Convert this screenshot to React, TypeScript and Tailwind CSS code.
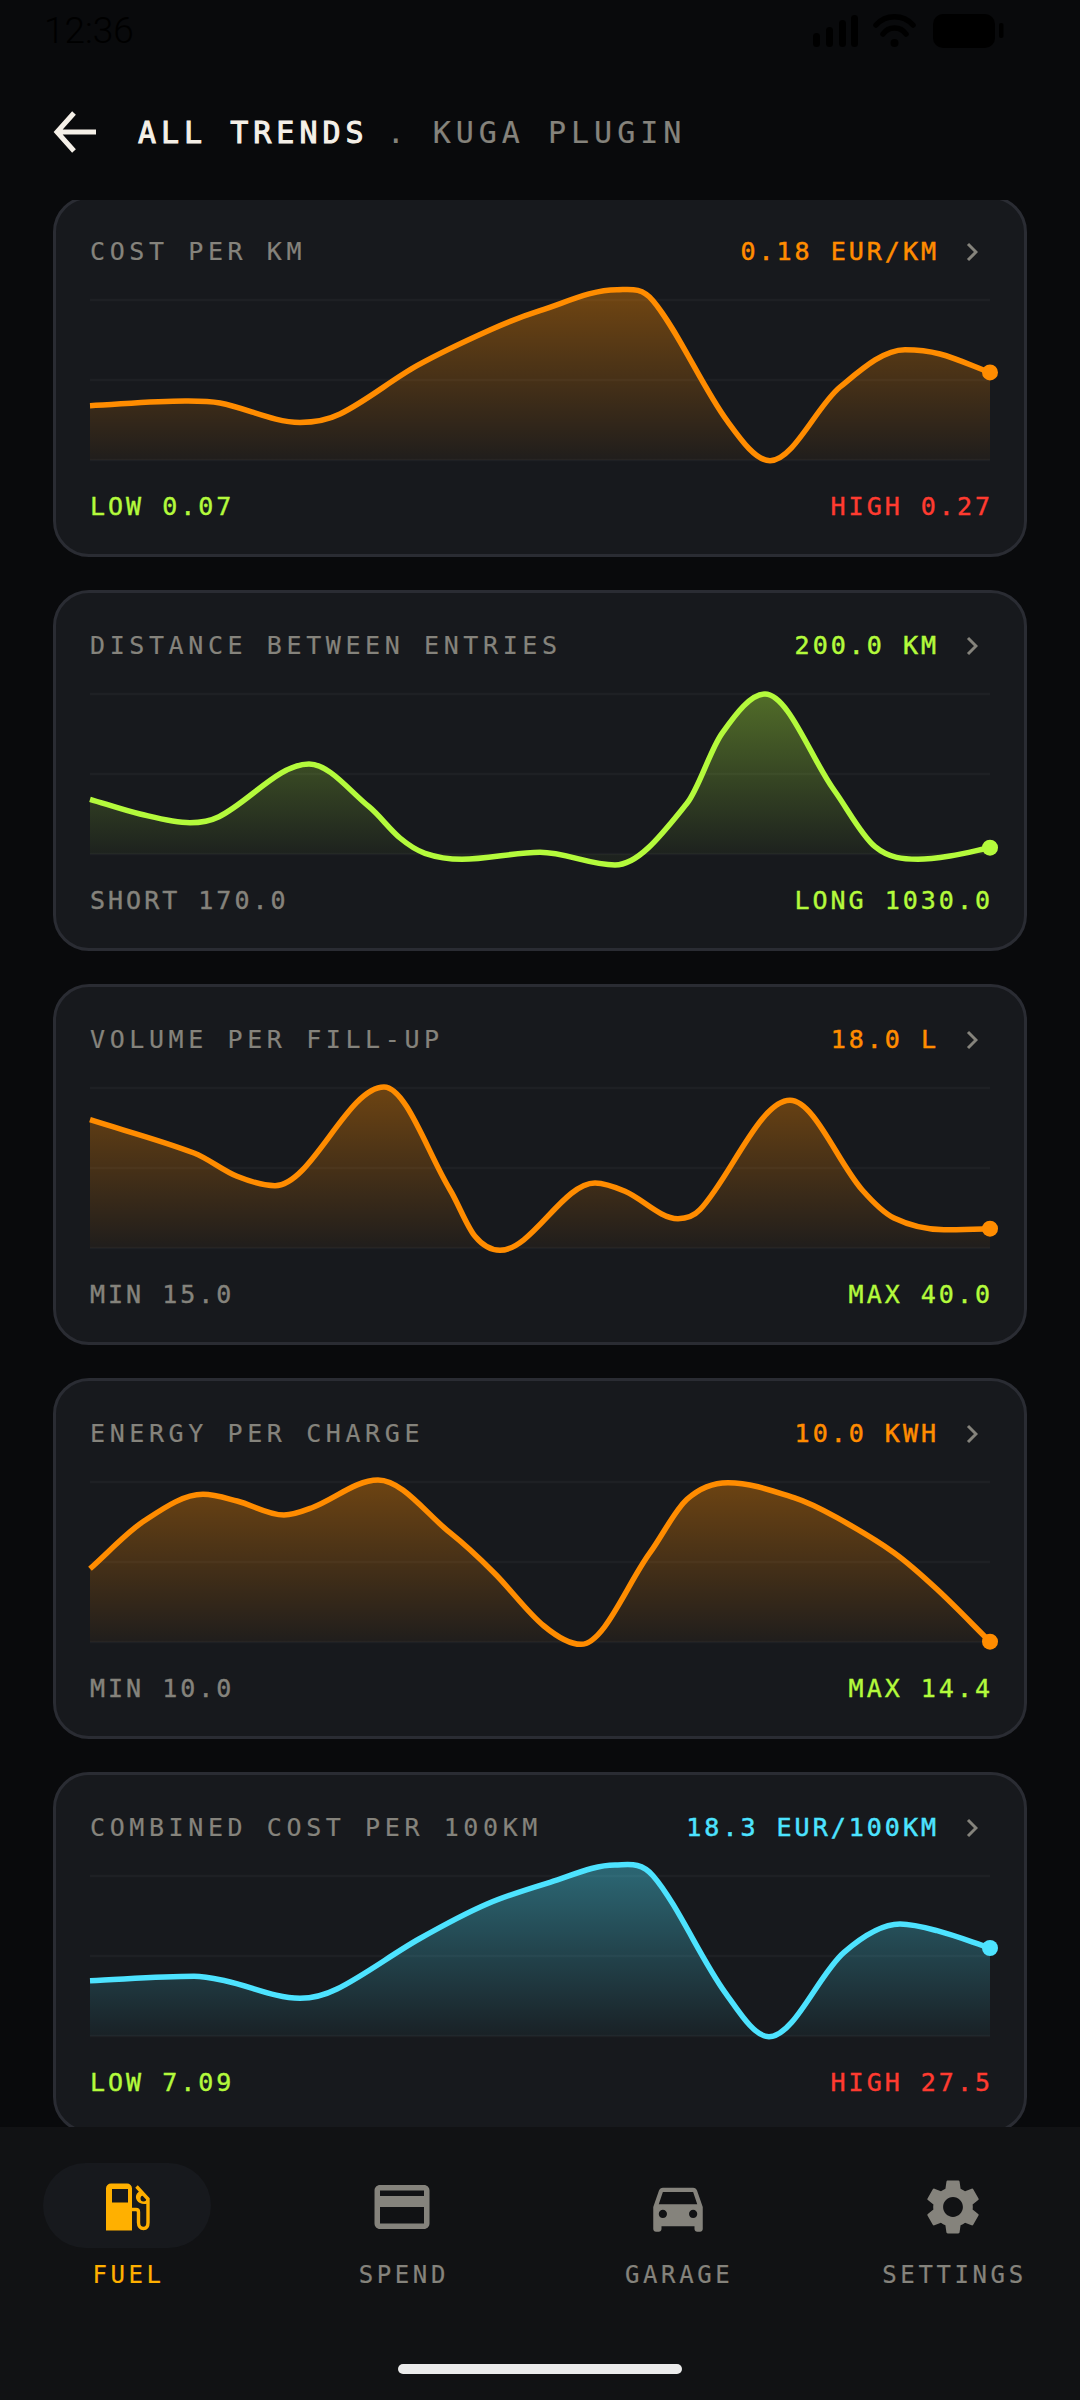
import React from "react";
import { MdCreditCard, MdDirectionsCar, MdSettings } from "react-icons/md";

type Pt = [number, number];

interface Trend {
  title: string;
  value: string;
  color: string;
  left: string;
  leftColor: string;
  right: string;
  rightColor: string;
  points: Pt[];
}

const ORANGE = "text-[#ff8c00]";
const LIME = "text-[#b4fa3c]";
const RED = "text-[#ff3b30]";
const CYAN = "text-[#4de3ff]";
const GREY = "text-[#85837c]";

const trends: Trend[] = [
  {
    title: "COST PER KM",
    value: "0.18 EUR/KM",
    color: "#ff8c00",
    left: "LOW 0.07",
    leftColor: LIME,
    right: "HIGH 0.27",
    rightColor: RED,
    points: [[0, 105.7], [95, 101], [130, 103], [210, 122.4], [250, 114], [327, 65.7], [400, 30], [450, 10.7], [527, -10.3], [563, 0.7], [637, 120.7], [680, 160.7], [750, 87], [815, 49.7], [850, 54], [900, 72.4]],
  },
  {
    title: "DISTANCE BETWEEN ENTRIES",
    value: "200.0 KM",
    color: "#b4fa3c",
    left: "SHORT 170.0",
    leftColor: GREY,
    right: "LONG 1030.0",
    rightColor: LIME,
    points: [[0, 105.3], [50, 120], [100, 128.7], [129, 122.7], [219, 70], [279, 112.7], [310, 144], [335, 159.3], [372, 165.3], [450, 158.3], [525, 171], [597, 109.3], [632, 39.3], [675, 0], [744, 96], [785, 152.7], [828, 165.3], [860, 162], [900, 153.7]],
  },
  {
    title: "VOLUME PER FILL-UP",
    value: "18.0 L",
    color: "#ff8c00",
    left: "MIN 15.0",
    leftColor: GREY,
    right: "MAX 40.0",
    rightColor: LIME,
    points: [[0, 31.7], [104, 65], [147, 88.3], [185, 97.7], [294, -1], [360, 101.7], [385, 148.3], [410, 162.3], [505, 95], [535, 103.3], [588, 130.7], [610, 121.7], [700, 12.3], [772, 101.7], [804, 130], [854, 141.7], [900, 140.7]],
  },
  {
    title: "ENERGY PER CHARGE",
    value: "10.0 KWH",
    color: "#ff8c00",
    left: "MIN 10.0",
    leftColor: GREY,
    right: "MAX 14.4",
    rightColor: LIME,
    points: [[0, 86.7], [54, 39], [113, 12.3], [147, 19], [194, 33], [222, 25.7], [288, -2], [360, 50.7], [404, 90.7], [454, 144], [491, 162.3], [560, 70.7], [597, 17.3], [638, 0.7], [704, 15.7], [747, 35.7], [804, 70.7], [847, 107.3], [900, 159.7]],
  },
  {
    title: "COMBINED COST PER 100KM",
    value: "18.3 EUR/100KM",
    color: "#4de3ff",
    left: "LOW 7.09",
    leftColor: LIME,
    right: "HIGH 27.5",
    rightColor: RED,
    points: [[0, 104.7], [104, 100.3], [135, 104.7], [210, 122.3], [247, 113], [329, 63], [397, 28], [460, 6.3], [525, -11], [563, -0.3], [635, 116.3], [679, 160.7], [754, 76.3], [810, 48], [847, 54.7], [900, 72]],
  },
];

const valueColors: Record<string, string> = {
  "#ff8c00": ORANGE,
  "#b4fa3c": LIME,
  "#4de3ff": CYAN,
};

// monotone cubic: flat at peaks and troughs, neighbour slope elsewhere
const smoothPath = (pts: Pt[]) => {
  const slope = (i: number) => {
    const a = pts[Math.max(i - 1, 0)];
    const p = pts[i];
    const b = pts[Math.min(i + 1, pts.length - 1)];
    if (i > 0 && i < pts.length - 1 && (p[1] - a[1]) * (b[1] - p[1]) <= 0) return 0;
    return (b[1] - a[1]) / (b[0] - a[0]);
  };
  let d = `M${pts[0][0]} ${pts[0][1]}`;
  for (let i = 0; i < pts.length - 1; i++) {
    const [x1, y1] = pts[i];
    const [x2, y2] = pts[i + 1];
    const h = (x2 - x1) / 3;
    d += ` C${(x1 + h).toFixed(1)} ${(y1 + slope(i) * h).toFixed(1)} ${(x2 - h).toFixed(1)} ${(y2 - slope(i + 1) * h).toFixed(1)} ${x2} ${y2}`;
  }
  return d;
};

const Chart = ({ trend, id }: { trend: Trend; id: string }) => {
  const line = smoothPath(trend.points);
  const last = trend.points[trend.points.length - 1];
  return (
    <svg width="900" height="160" viewBox="0 0 900 160" className="block overflow-visible">
      <defs>
        <linearGradient id={id} gradientUnits="userSpaceOnUse" x1="0" y1="0" x2="0" y2="160">
          <stop offset="0" stopColor={trend.color} stopOpacity="0.37" />
          <stop offset="1" stopColor={trend.color} stopOpacity="0.04" />
        </linearGradient>
      </defs>
      {[0, 80, 160].map((y) => (
        <line key={y} x1="0" x2="900" y1={y} y2={y} stroke="#1e2024" strokeWidth="2.5" />
      ))}
      <path d={`${line} L900 160 L0 160 Z`} fill={`url(#${id})`} />
      <path d={line} fill="none" stroke={trend.color} strokeWidth="5.5" strokeLinejoin="round" />
      <circle cx={last[0]} cy={last[1]} r="8" fill={trend.color} />
    </svg>
  );
};

const TrendCard = ({ trend, index }: { trend: Trend; index: number }) => (
  <div className="h-[361px] rounded-[36px] border-[3px] border-[#2a2c33] bg-[#17191d] px-[34px] pt-[37px]">
    <div className="flex h-[32px] items-center justify-between">
      <span className={`text-[25px] tracking-[4.6px] [-webkit-text-stroke:0.2px] ${GREY}`}>{trend.title}</span>
      <div className="flex items-center">
        <span className={`text-[25px] tracking-[3px] [-webkit-text-stroke:0.5px] ${valueColors[trend.color]}`}>{trend.value}</span>
        <svg width="12" height="20" viewBox="0 0 12 20" fill="none" className="mr-[12px] ml-[27px]">
          <path d="M2 2l8 8-8 8" stroke="#85837c" strokeWidth="3" />
        </svg>
      </div>
    </div>
    <div className="mt-[32px]">
      <Chart trend={trend} id={`fill-${index}`} />
    </div>
    <div className="mt-[31px] flex h-[32px] items-center justify-between">
      <span className={`text-[25px] tracking-[3px] [-webkit-text-stroke:0.4px] ${trend.leftColor}`}>{trend.left}</span>
      <span className={`mr-[-3px] text-[25px] tracking-[3px] [-webkit-text-stroke:0.4px] ${trend.rightColor}`}>{trend.right}</span>
    </div>
  </div>
);

const FuelIcon = () => (
  <svg width="66" height="66" viewBox="64 42.5 66 66" fill="none">
    <path
      fillRule="evenodd"
      d="M76 100V58a5 5 0 0 1 5-5h16a5 5 0 0 1 5 5v42H76zM82 58.500V72h16V58.500H82z"
      fill="#ffb000"
    />
    <path
      d="M102 79h4c1.6 0 2.5 1 2.5 2.5V92c0 3.6 2 6 5 6s4.5-2.4 4.5-6V68.500L106.500 56"
      stroke="#ffb000"
      strokeWidth="3.4"
    />
    <path
      fillRule="evenodd"
      d="M118 68l-8-8-3 3c-1.500 2-1.500 5 0 7 2 3 6 4.500 11 3v-5zM113.500 65a3 3 0 1 0 0 6 3 3 0 0 0 0-6z"
      fill="#ffb000"
    />
  </svg>
);

const navItems = [
  { label: "FUEL", icon: <FuelIcon />, active: true },
  { label: "SPEND", icon: <MdCreditCard size={66} className="mt-[2px]" />, active: false },
  { label: "GARAGE", icon: <MdDirectionsCar size={66} className="mt-[2px]" />, active: false },
  { label: "SETTINGS", icon: <MdSettings size={66} className="mt-[2px]" />, active: false },
];

const StatusIcons = () => (
  <svg width="192" height="36" viewBox="0 0 192 36" fill="#000">
    <rect x="0" y="19" width="7" height="14" rx="3.5" />
    <rect x="13" y="13" width="7" height="20" rx="3.5" />
    <rect x="26" y="6" width="7" height="27" rx="3.5" />
    <rect x="38" y="1" width="7" height="32" rx="3.5" />
    <path d="M63 11a25 25 0 0 1 37 0" stroke="#000" strokeWidth="5.500" fill="none" strokeLinecap="round" />
    <path d="M70 20a14 14 0 0 1 23 0" stroke="#000" strokeWidth="5.500" fill="none" strokeLinecap="round" />
    <circle cx="81.500" cy="29" r="4" />
    <rect x="120" y="0" width="62" height="34" rx="10" />
    <rect x="186" y="9" width="4.500" height="15" rx="2" />
  </svg>
);

const App: React.FC = () => {
  return (
    <div className="flex h-[2400px] w-[1080px] flex-col overflow-hidden bg-[#090a0c] font-['DejaVu_Sans_Mono',monospace]">
      <header className="h-[200px] shrink-0">
        <div className="flex h-[60px] items-start justify-between pt-[14px] pr-[75px] pl-[44px]">
          <span className="font-['Roboto',sans-serif] text-[37px] leading-[34px] font-light tracking-[0px] text-black">12:36</span>
          <div className="ml-auto">
            <StatusIcons />
          </div>
        </div>
        <div className="mt-[50px] flex h-[44px] items-center pl-[52px]">
          <svg width="46" height="44" viewBox="0 0 46 44" fill="none">
            <path d="M44 22H6M22 3L5 22l17 19" stroke="#f5f0e8" strokeWidth="5" />
          </svg>
          <span className="ml-[40px] text-[30px] tracking-[5px] text-[#f5f0e8] [-webkit-text-stroke:1px]">ALL TRENDS</span>
          <span className="ml-[18px] text-[30px] tracking-[5px] text-[#85837c]">.</span>
          <span className="ml-[23px] text-[30px] tracking-[5px] text-[#85837c] [-webkit-text-stroke:0.2px]">KUGA PLUGIN</span>
        </div>
      </header>

      <div className="min-h-0 flex-1 overflow-hidden">
        <div className="mx-[53px] mt-[-4px] flex flex-col gap-[33px]">
          {trends.map((trend, i) => (
            <TrendCard key={trend.title} trend={trend} index={i} />
          ))}
        </div>
      </div>

      <nav className="h-[273px] shrink-0 bg-[#111214]">
        <div className="flex justify-between px-[43px] pt-[36px]">
          {navItems.map((item) => (
            <div key={item.label} className="flex w-[168px] flex-col items-center">
              <div
                className={`flex h-[85px] w-[168px] items-center justify-center rounded-full ${
                  item.active ? "bg-[#17191d] text-[#ffb000]" : "text-[#85837c]"
                }`}
              >
                {item.icon}
              </div>
              <span
                className={`mt-[11px] ml-[3px] text-[24px] leading-[32px] tracking-[3.6px] [-webkit-text-stroke:0.2px] ${
                  item.active ? "text-[#ffb000]" : "text-[#85837c]"
                }`}
              >
                {item.label}
              </span>
            </div>
          ))}
        </div>
        <div className="mx-auto mt-[73px] h-[10px] w-[284px] rounded-full bg-[#ebebeb]" />
      </nav>
    </div>
  );
};

export default App;
